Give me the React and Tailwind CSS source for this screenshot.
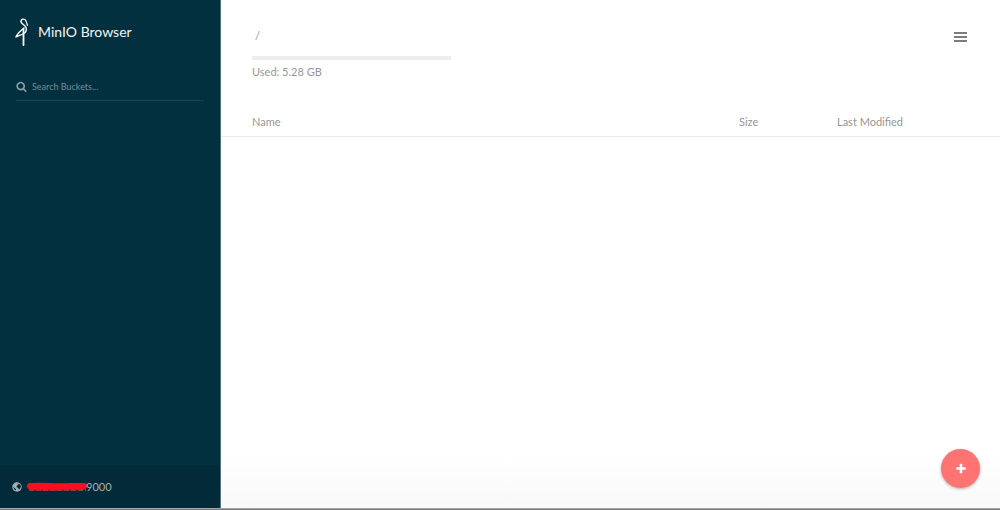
import { useState } from "react";

function StorkLogo() {
  return (
    <svg viewBox="0 0 26 56" className="w-[13px] h-7 shrink-0" fill="none" stroke="#fff" strokeLinejoin="round" strokeLinecap="round" aria-hidden="true">
      <path d="M12 7C12 1 20 1 22 6L25 15" strokeWidth="2.4" />
      <path d="M12 7C12 11 16 12 19 15C24 19 24 26 19 30C14 34 8 34 2 38C4 31 11 26 18 20" strokeWidth="2.8" />
      <path d="M17 22V54" strokeWidth="3.6" />
    </svg>
  );
}

function SearchIcon() {
  return (
    <svg viewBox="0 0 1792 1792" className="w-[11px] h-[11px] shrink-0" fill="currentColor" aria-hidden="true">
      <path d="M1216 832q0-185-131.5-316.5t-316.5-131.5-316.5 131.5-131.5 316.5 131.5 316.5 316.5 131.5 316.5-131.5 131.5-316.5zm512 832q0 52-38 90t-90 38q-54 0-90-38l-343-342q-179 124-399 124-143 0-273.5-55.5t-225-150-150-225-55.5-273.5 55.5-273.5 150-225 225-150 273.5-55.5 273.5 55.5 225 150 150 225 55.5 273.5q0 220-124 399l343 343q37 37 37 90z" />
    </svg>
  );
}

function GlobeIcon() {
  return (
    <svg viewBox="0 0 20 20" className="w-2.5 h-2.5 shrink-0" aria-hidden="true">
      <circle cx="10" cy="10" r="9.5" fill="currentColor" />
      <path d="M10 3L13 5L10 7L9 10L12 12L14 15L17 12L18 8L15 4ZM2 9L5 12L8 14L8 17L5 15L3 12Z" fill="#022a38" />
    </svg>
  );
}

function PlusIcon() {
  return (
    <svg viewBox="0 0 1792 1792" className="w-3 h-3" fill="currentColor" aria-hidden="true">
      <path d="M1600 736v192q0 40-28 68t-68 28h-416v416q0 40-28 68t-68 28h-192q-40 0-68-28t-28-68v-416h-416q-40 0-68-28t-28-68v-192q0-40 28-68t68-28h416v-416q0-40 28-68t68-28h192q40 0 68 28t28 68v416h416q40 0 68 28t28 68z" />
    </svg>
  );
}

function Sidebar() {
  const [query, setQuery] = useState("");

  return (
    <aside className="w-[221px] shrink-0 flex flex-col bg-[#02303f] border-r border-[#52717b]">
      <div className="flex items-center gap-2.5 px-[15px] pt-[17px]">
        <StorkLogo />
        <h1 className="text-[14px] leading-[30px] text-[#f3f6f7]">MinIO Browser</h1>
      </div>

      <label className="mx-4 mt-[26px] flex items-center gap-[5px] h-7 border-b border-[#1b4453] text-[#8da1a8]">
        <SearchIcon />
        <input
          type="text"
          value={query}
          onChange={(e) => setQuery(e.target.value)}
          placeholder="Search Buckets..."
          aria-label="Search Buckets"
          className="min-w-0 flex-1 bg-transparent text-[9px] leading-4 outline-none placeholder:text-[#758e96]"
        />
      </label>

      <div className="mt-auto flex items-center h-[43px] px-3 bg-[#022a38] text-[#a3b1b7]">
        <GlobeIcon />
        {/* host is redacted, only the port stays readable */}
        <svg viewBox="0 0 62 10" className="ml-1 w-[62px] h-2.5 shrink-0" role="img" aria-label="Hidden host">
          <path d="M3 8H60" stroke="#6c4652" strokeWidth="2" strokeDasharray="5 2" />
          <path d="M4 4C18 3 32 5 45 4L58 4M5 5C20 6 40 5 57 5" stroke="#fb0d1b" strokeWidth="6" strokeLinecap="round" fill="none" />
        </svg>
        <span className="-ml-0.5 text-[11px] leading-4">9000</span>
      </div>
    </aside>
  );
}

function ObjectTable() {
  return (
    <table className="mt-8 w-full table-fixed text-left text-[11px] leading-4 text-[#969696]">
      <thead>
        <tr className="border-b border-[#ededed]">
          <th className="pl-[31px] pt-0.5 pb-1.5 font-normal">Name</th>
          <th className="w-[98px] pt-0.5 pb-1.5 font-normal">Size</th>
          <th className="w-[163px] pt-0.5 pb-1.5 font-normal">Last Modified</th>
        </tr>
      </thead>
      <tbody />
    </table>
  );
}

export default function App() {
  return (
    <div className="min-h-screen flex flex-col bg-white font-['Lato',sans-serif]">
      <div className="flex-1 flex">
        <Sidebar />
        <main className="min-w-0 flex-1 flex flex-col bg-gradient-to-t from-[#f8f8f8] to-white to-10%">
          <header className="flex items-start justify-between pl-[31px] pr-[33px] pt-7">
            <div className="w-[199px]">
              <a href="#root" className="block pl-[3px] text-[11px] leading-4 text-[#969696]">/</a>
              <div className="mt-3 h-1 bg-[#ededed]" />
              <p className="mt-1 text-[11px] leading-4 text-[#969696]">Used: 5.28 GB</p>
            </div>
            <button type="button" aria-label="Menu" className="mt-1 flex flex-col gap-0.5">
              <span className="block w-[13px] h-0.5 bg-[#7d7d7d]" />
              <span className="block w-[13px] h-0.5 bg-[#7d7d7d]" />
              <span className="block w-[13px] h-0.5 bg-[#7d7d7d]" />
            </button>
          </header>

          <ObjectTable />

          <button
            type="button"
            aria-label="Add"
            className="mt-auto mb-5 mr-5 self-end flex items-center justify-center w-[39px] h-[39px] rounded-full bg-[#ff7473] text-white shadow-[0_1px_3px_rgba(0,0,0,0.3)]"
          >
            <PlusIcon />
          </button>
        </main>
      </div>
      <div className="h-0.5 bg-[#77777a] border-t border-[#a8a8a8]" />
    </div>
  );
}
